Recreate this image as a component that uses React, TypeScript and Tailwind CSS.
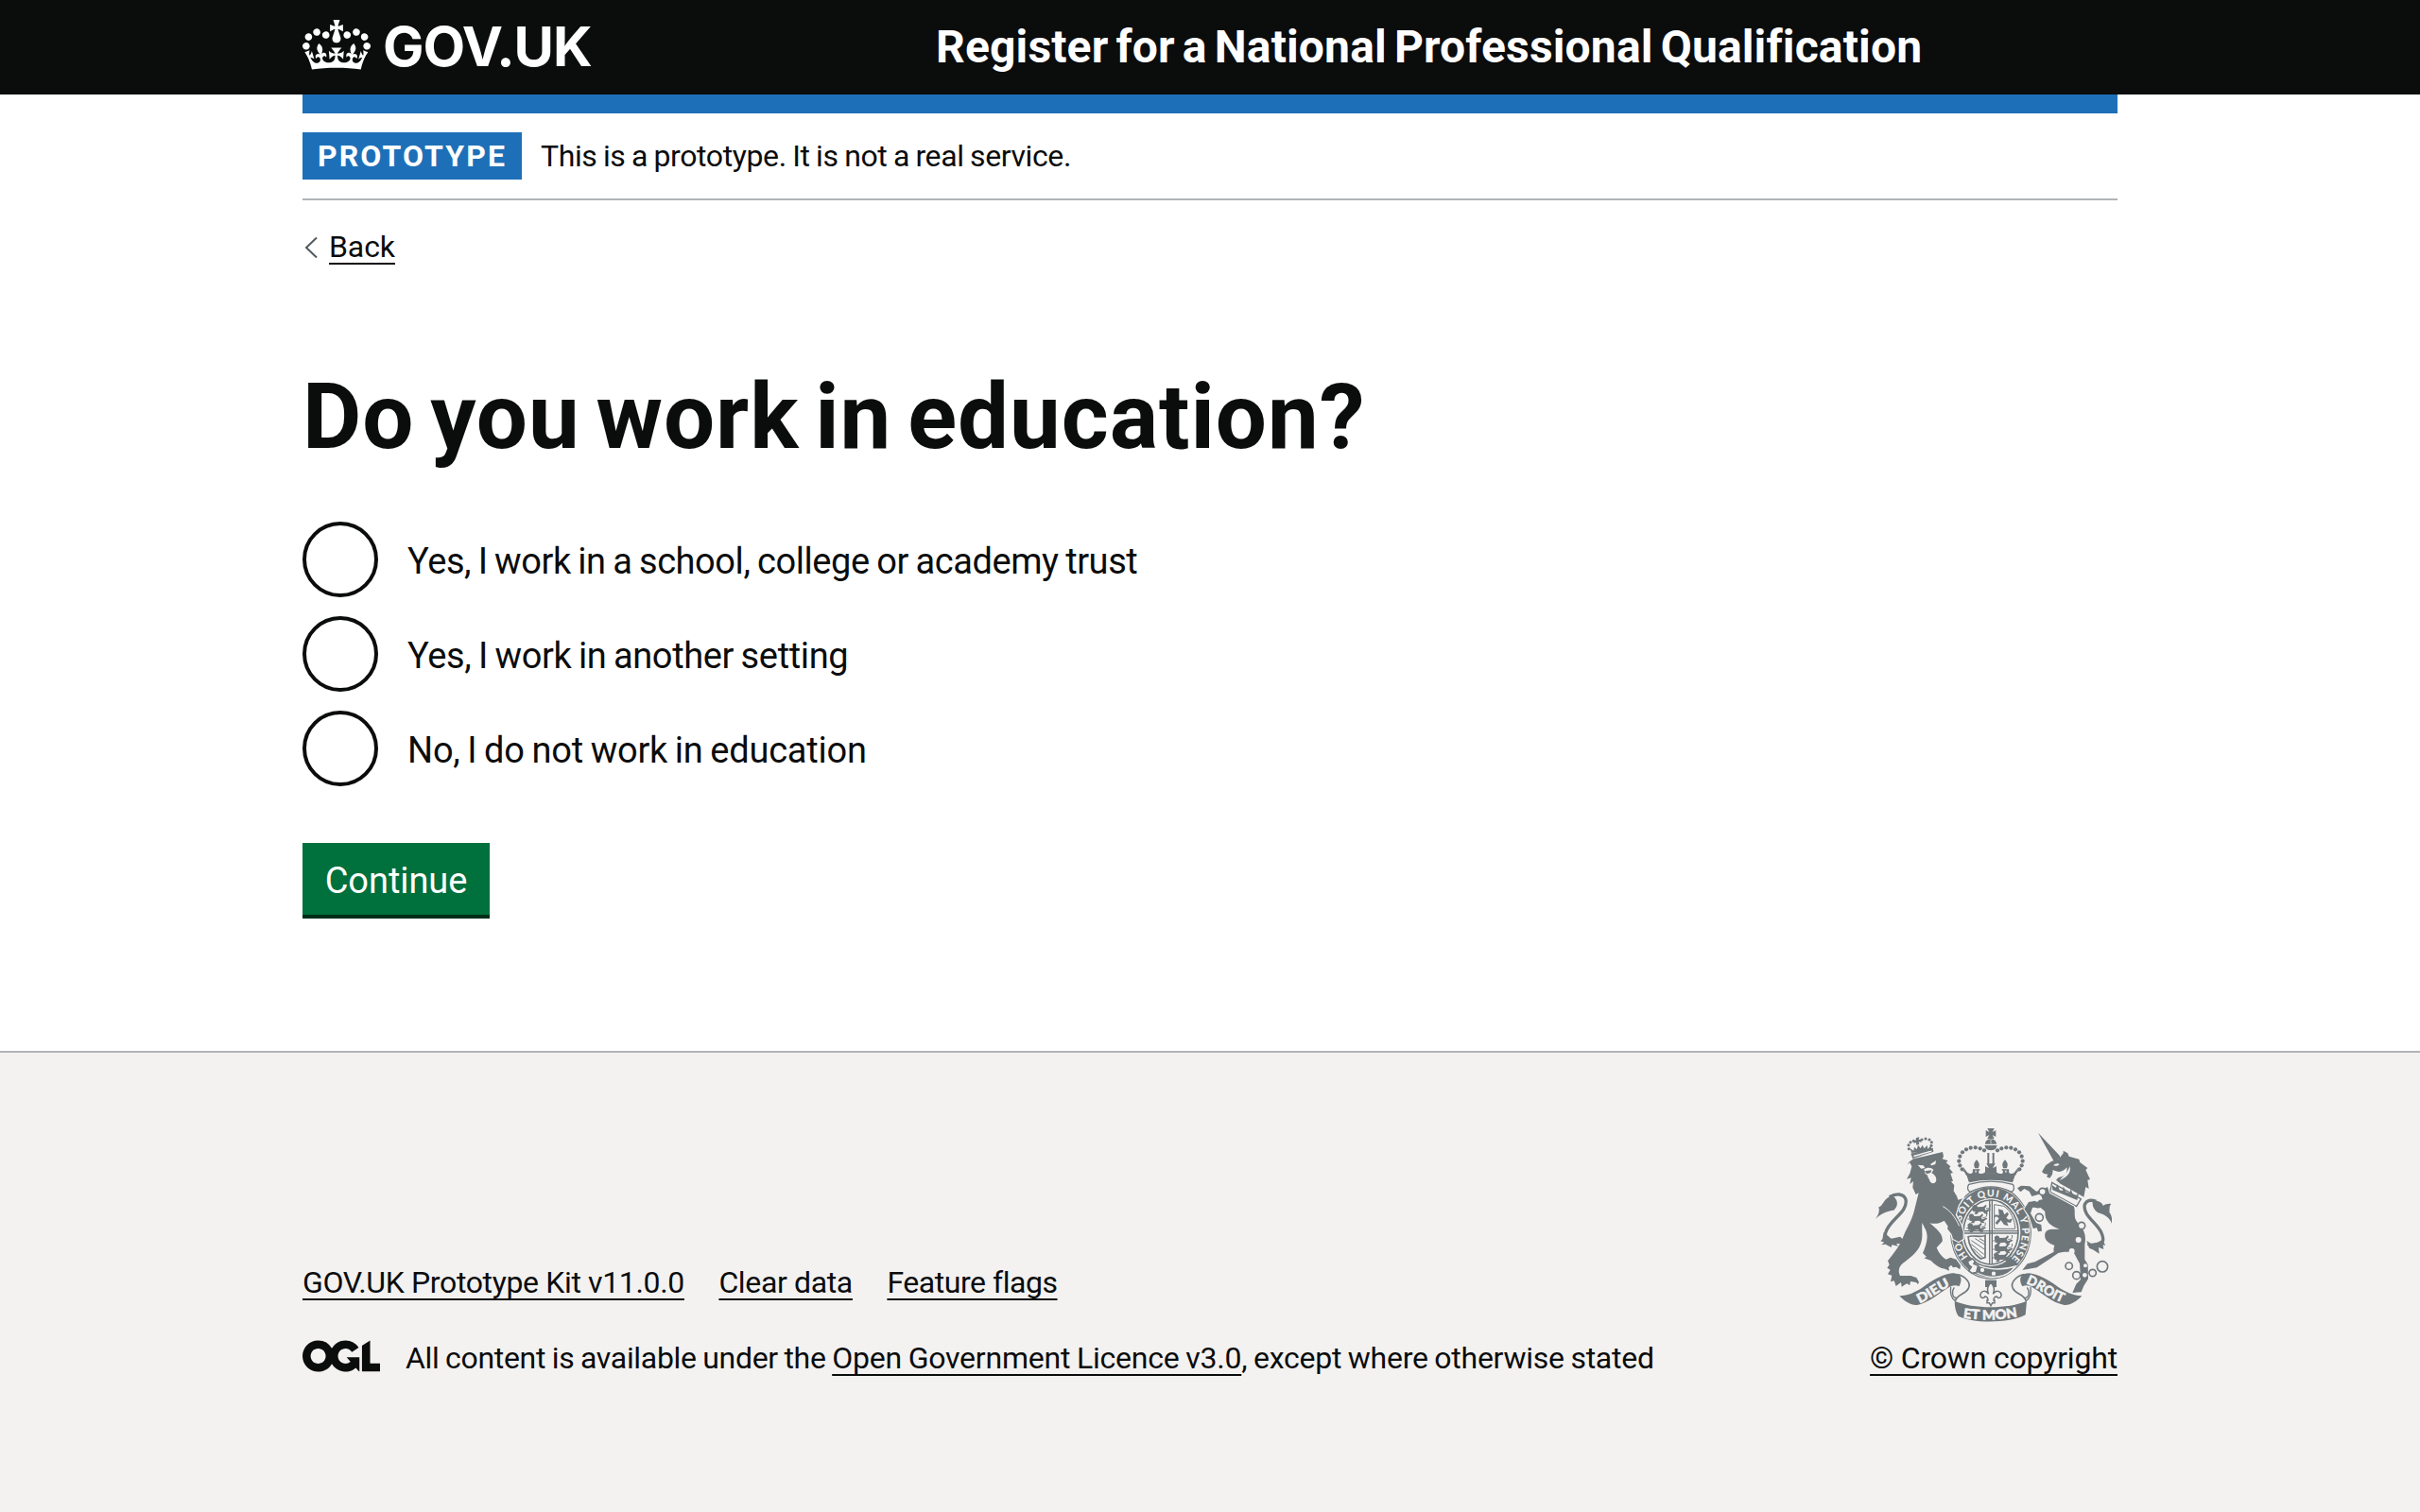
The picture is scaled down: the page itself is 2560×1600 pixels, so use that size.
import React from "react";

const link =
  "underline decoration-2 underline-offset-[6px] [text-decoration-skip-ink:none]";

function Crown() {
  return (
    <svg viewBox="0 0 132 97" className="mt-[21px] h-[53px] w-[72px] shrink-0" fill="currentColor" aria-hidden="true">
      <path d="M25 30.2c3.5 1.5 7.7-.2 9.1-3.7 1.5-3.6-.2-7.8-3.9-9.2-3.6-1.4-7.6.3-9.1 3.9-1.4 3.5.3 7.5 3.9 9zM9 39.5c3.6 1.5 7.8-.2 9.2-3.7 1.5-3.6-.2-7.8-3.9-9.1-3.6-1.5-7.6.2-9.1 3.8-1.4 3.5.3 7.5 3.8 9zM4.4 57.2c3.5 1.5 7.7-.2 9.1-3.8 1.5-3.6-.2-7.7-3.9-9.1-3.5-1.5-7.6.3-9.1 3.8-1.4 3.5.3 7.6 3.9 9.1zm38.3-21.4c3.5 1.5 7.7-.2 9.1-3.8 1.5-3.6-.2-7.7-3.9-9.1-3.6-1.5-7.6.3-9.1 3.8-1.3 3.6.4 7.7 3.9 9.1zm64.4-5.6c-3.6 1.5-7.8-.2-9.1-3.7-1.5-3.6.2-7.8 3.8-9.2 3.6-1.4 7.7.3 9.2 3.9 1.3 3.5-.4 7.5-3.9 9zm15.9 9.3c-3.6 1.5-7.7-.2-9.1-3.7-1.5-3.6.2-7.8 3.7-9.1 3.6-1.5 7.7.2 9.2 3.8 1.5 3.5-.3 7.5-3.8 9zm4.7 17.7c-3.6 1.5-7.8-.2-9.2-3.8-1.5-3.6.2-7.7 3.9-9.1 3.6-1.5 7.7.3 9.2 3.8 1.3 3.5-.4 7.6-3.9 9.1zM89.3 35.8c-3.6 1.5-7.8-.2-9.2-3.8-1.4-3.6.2-7.7 3.9-9.1 3.6-1.5 7.7.3 9.2 3.8 1.4 3.6-.3 7.7-3.9 9.1zM69.7 17.7l8.9 4.7V9.3l-8.9 2.8c-.2-.3-.5-.6-.9-.9L72.4 0H59.6l3.5 11.2c-.3.3-.6.5-.9.9l-8.8-2.8v13.1l8.8-4.7c.3.3.6.7.9.9l-5 15.4v.1c-.2.8-.4 1.6-.4 2.4 0 4.1 3.1 7.5 7 8.1h.2c.3 0 .7.1 1 .1.4 0 .7 0 1-.1h.2c4-.6 7.1-4.1 7.1-8.1 0-.8-.1-1.7-.4-2.4V34l-5.1-15.4c.4-.2.7-.6 1-.9zM66 92.8c16.9 0 32.8 1.1 47.1 3.2 4-16.9 8.9-26.7 14-33.5l-9.6-3.4c1 4.9 1.1 7.2 0 10.2-1.5-1.4-3-4.3-4.2-8.7L108.6 76c2.8-2 5-3.2 7.5-3.3-4.4 9.4-10 11.9-13.6 11.2-4.3-.8-6.3-4.6-5.6-7.9 1-4.7 5.7-5.9 8-.5 4.3-8.7-3-11.4-7.6-8.8 7.1-7.2 7.9-13.5 2.1-21.1-8 6.1-8.1 12.3-4.5 20.8-4.7-5.4-12.1-2.5-9.5 6.2 3.4-5.2 7.9-2 7.2 3.1-.6 4.3-6.4 7.8-13.5 7.2-10.3-.9-10.9-8-11.2-13.8 2.5-.5 7.1 1.8 11 7.3L80.2 60c-4.1 4.4-8 5.3-12.3 5.4 1.4-4.4 8-11.6 8-11.6H55.5s6.4 7.2 7.9 11.6c-4.2-.1-8-1-12.3-5.4l1.4 16.4c3.9-5.5 8.5-7.7 10.9-7.3-.3 5.8-.9 12.8-11.1 13.8-7.2.6-12.9-2.9-13.5-7.2-.7-5 3.8-8.3 7.1-3.1 2.7-8.7-4.6-11.6-9.4-6.2 3.7-8.5 3.6-14.7-4.6-20.8-5.8 7.6-5 13.9 2.2 21.1-4.7-2.6-11.9.1-7.7 8.8 2.3-5.5 7.1-4.2 8.1.5.7 3.3-1.3 7.1-5.7 7.9-3.5.7-9-1.8-13.5-11.2 2.5.1 4.7 1.3 7.5 3.3l-4.7-15.4c-1.2 4.4-2.7 7.2-4.3 8.7-1.1-3-.9-5.3 0-10.2l-9.5 3.4c5 6.9 9.9 16.7 14 33.5 14.8-2.1 30.8-3.2 47.7-3.2z" />
    </svg>
  );
}

function LicenceLogo() {
  return (
    <svg viewBox="0 0 483.2 195.7" className="mt-[6px] h-[34px] w-[82px] shrink-0" fill="currentColor" role="img" aria-label="Open Government Licence">
      <path d="M421.5 142.8V.1l-50.7 32.3v161.1h112.4v-50.7zm-122.3-9.6A47.12 47.12 0 0 1 221 97.8c0-26 21.1-47.1 47.1-47.1 16.7 0 31.4 8.7 39.7 21.8l42.7-27.2A97.63 97.63 0 0 0 268.1 0c-36.5 0-68.3 20.1-85.1 49.7A98 98 0 0 0 97.8 0C43.9 0 0 43.9 0 97.8s43.9 97.8 97.8 97.8c36.5 0 68.3-20.1 85.1-49.7a97.76 97.76 0 0 0 149.6 25.4l19.4 22.2h3v-87.8h-80l24.3 27.5zM97.8 145c-26 0-47.1-21.1-47.1-47.1s21.1-47.1 47.1-47.1 47.1 21.1 47.1 47.1S123.8 145 97.8 145z" />
    </svg>
  );
}

const G = "#6f777b";
const P = "#f3f2f1";

/* One half of the large crown; the other half is its mirror image. */
const archBeads: [number, number][] = [
  [347, 172], [340, 160], [337, 146], [340, 131], [348, 118], [360, 109], [374, 104], [389, 103], [404, 106], [417, 112],
];

function CrownHalf() {
  return (
    <g>
      {archBeads.map(([x, y]) => (
        <circle key={x + "-" + y} cx={x} cy={y} r="6.3" fill={G} />
      ))}
      <path fill={G} d="M438 185h-16l8-14-10-8v18c-12 12-24 6-20-8-5-2-8 4-9 10h-2c0-8-4-12-9-9 4 10-5 16-16 9l-13-17 8 24c7 6 8 14 8 21 22-8 46-11 71-11z" />
      <path fill={G} d="M393 142c-10 10-10 18-5 27h10c5-9 5-17-5-27z" />
      <path fill="none" stroke={G} strokeWidth="4" d="M381 174h22M361 188c-4-8-6-11-12-13" />
    </g>
  );
}

function Scroll() {
  return (
    <g>
      <path fill={G} d="M148 574c28-2 52-12 76-29 30-22 60-39 91-43 27 0 36 16 22 42-8-5-16-4-27 0-36 20-64 51-106 59-19 2-40-12-56-29z" />
      <path fill="none" stroke={G} strokeWidth="5" d="M331 506c24 4 46 26 36 44-10 20-34 16-42 40" />
      <path fill="none" stroke={G} strokeWidth="4" d="M311 545c-3 24 3 38 14 44M322 547c-10 14-6 36 8 33" />
    </g>
  );
}

/* A small lion passant, repeated in the quarters of the shield. */
function Passant({ x, y }: { x: number; y: number }) {
  return (
    <g transform={`translate(${x} ${y})`}>
      <path fill={G} d="M0 6l7-6 8 3 2 5 18-1 8-7 3 4-6 8 2 6 14-5 3 3-12 8 3 6-10-1-7-7-14 2-2 6H6l5-8-8 1z" />
      <path fill="none" stroke={G} strokeWidth="3" d="M44 12c10 2 15-4 12-13M2 17h-6M15 21H6" />
    </g>
  );
}

function Crest() {
  return (
    <svg viewBox="72 30 750 630" className="h-[210px] w-[250px]" role="img" aria-label="Royal coat of arms">
      <defs>
        <path id="garter-low" d="M366 450A99 113 0 0 1 341 350" />
        <path id="garter" d="M344 337A99 113 0 1 1 500 460" />
        <path id="motto-left" d="M212 598C250 582 278 554 318 539" />
        <path id="motto-right" d="M549 535C588 547 624 583 674 598" />
        <path id="motto-mid" d="M350 643C400 652 474 652 532 638" />
      </defs>

      {/* garter and shield */}
      <ellipse cx="438" cy="372" rx="129" ry="149" fill={G} />
      <ellipse cx="438" cy="372" rx="125" ry="145" fill="none" stroke={P} strokeWidth="2.500" />
      <ellipse cx="438" cy="372" rx="94" ry="108" fill={P} />
      <ellipse cx="438" cy="372" rx="87" ry="102" fill="none" stroke={G} strokeWidth="5" />
      <path fill="none" stroke={G} strokeWidth="4" d="M434 268v204M442 268v204M350 368h175M350 375h175" />
      <Passant x={379} y={284} />
      <Passant x={368} y={313} />
      <Passant x={364} y={342} />
      <Passant x={449} y={382} />
      <Passant x={449} y={409} />
      <Passant x={447} y={436} />
      <path fill="none" stroke={G} strokeWidth="3" d="M449 284v77h66c0-28-14-58-36-72z" />
      <path fill={G} d="M462 298l14 4 5 14 9-8 5 6-8 12 8 6 12-4-6 14-12-2 5 12-14-4-10-14-12 14-6-6 12-14-8-6-8 4 4-10 12 2z" />
      <path fill="none" stroke={G} strokeWidth="5" d="M366 386c14-6 42 4 54-4v70l-14 4c-22-14-38-42-40-70z" />
      <path fill="none" stroke={G} strokeWidth="3" d="M376 398l42 28M376 410l40 32M382 424l30 28M388 392l32 20M402 392l18 10" />
      <g fill={P} fontFamily="Lato, sans-serif" fontWeight="900" fontSize="31">
        <text>
          <textPath href="#garter-low" startOffset="0" textLength="52">HO</textPath>
        </text>
        <text>
          <textPath href="#garter" startOffset="0" textLength="392">SOIT QUI MAL Y PENSE</textPath>
        </text>
      </g>
      {/* buckle and strap */}
      <path fill={G} stroke={P} strokeWidth="4" d="M382 470c40 20 84 26 134 10-26 36-74 46-128 18z" />
      <path fill={P} stroke={G} strokeWidth="5" d="M364 464l16-8 8 8-4 8 14 6-6 22-14 2-10-8 8-12-8-6z" />
      <circle cx="411" cy="492" r="6.500" fill={P} />
      <circle cx="447" cy="503" r="6.500" fill={P} />

      {/* large crown */}
      <CrownHalf />
      <g transform="matrix(-1 0 0 1 876 0)">
        <CrownHalf />
      </g>
      <path fill={G} d="M427 42h22l-6 12 11-6v21l-11-6 6 12h-22l6-12-11 6V48l11 6zM438 76c14 0 18 10 18 16h-36c0-6 4-16 18-16zM418 96h40l-4 10c-6 8-26 8-32 0zM427 120h6v36h-6zM443 120h6v36h-6zM424 154h28l-8 14 12-5v22h-36v-22l12 5z" />
      <path stroke={P} strokeWidth="2" d="M438 78v14" />
      <path fill={G} d="M362 194c50-14 102-14 152 0l-8 20c-44-10-92-10-136 0z" />
      <path fill={P} stroke={G} strokeWidth="4" d="M368 220c44-12 96-12 140 0 6 8 4 20-4 24-42-22-90-22-132 0-8-4-10-16-4-24z" />

      {/* lion */}
      <path fill={G} stroke={P} strokeWidth="7" style={{ paintOrder: "stroke" }} d="M172 158l8-10 12-9 93-22 3 14-4 8 18 6-6 6 14 12-4 6 12 14-8 2 8 24-6 2 10 12-2 18 10 16 4 12 14-4-13 22-9 30 16 28 8 24v24l-14 9-18-9-4-14-14-18 2-8-12-18c-12 8-26 12-46 8 22 18 44 36 40 58l-18 20c6 14 14 28 30 37l14-6 18 6 14 20-2 12-12-8-10 2-6-8-8 8 2 10-14-6c-18-2-30-12-44-26l-22-8 8-4-12-12c10-24 20-50 9-74l-11-22c-2 22 4 46-5 68-10 26-34 44-56 60-12 10-17 24-9 40h34l18 6 8 14-3 7-6-6-18-3-2 12-10-5-16 10-2-14-16 12-6-17-11 3 4-20-13-4 8-14-10-6 7-10-5-12c18-24 40-48 52-84 10-24 26-46 34-84l12-48-9 5-10-22 2-20-11 9 4-20-14 4 10-18 6-22-6-12z" />
      <path fill={P} d="M206 158l18 2 5 8-12 2zM246 156l18-12-2 12-12 4zM226 172c10-8 24-6 30 2l-6 10c8 4 18 14 14 26-4 10-18 8-20-2-2-8-8-10-6-16l-8-6z" />
      <path fill={G} d="M228 178l22-3-3 8-12 4z" />
      <path fill="none" stroke={P} strokeWidth="3" d="M286 290c22 12 38 32 52 62" />
      <path fill="none" stroke={G} strokeWidth="10" d="M152 396c-26 20-54 8-48-22 10-42 72-64 64-106-6-20-32-20-52-8" />
      <path fill={G} d="M72 330c14-20 12-30 10-38 14-2 14-28 44-36 20 14 18 34 4 46-20 2-42 10-58 28zM98 372l-4 22-6 6 12 4-10 8 14-2 18 10 2-8 20 4-6-8c14 2 22-4 26-10l-14-12-28 6z" />
      <path fill={G} d="M184 122l70-18 2 12-66 22z" />
      <path fill={P} d="M192 128l58-16v4l-56 17z" />
      <path fill={G} d="M186 120l-4-14 11 7 2-12 8 8 4-14 8 10 6-10 6 11 9-10 2 11 12-12-2 18z" />
      {[[178, 107], [177, 95], [183, 86], [193, 82], [219, 78], [231, 75], [243, 78], [250, 86], [249, 97]].map(([x, y]) => (
        <circle key={x} cx={x} cy={y} r="4.6" fill={G} />
      ))}
      <path fill={G} d="M201 72l10-2-2 8 8-1 1 9-9-1 2 8-9 2-1-8-7 2-2-8 8-1z" />

      {/* unicorn */}
      <path fill={G} d="M588 56l68 72 2 8-20 10zM600 180l12-20 18-13 24-8 14-18v-8l14 8 4 10 32 9 3 10 24 18-6 6 14 30-8 2 4 28-10-6-6 32c-24-14-48-28-74-42l-14-12 8-8c16-2 30-8 26-32-16 20-30 14-44 8l-2 14-8 12-10-4 4-8-12-2z" />
      <path fill={P} d="M636 160c6-6 14-8 20-4-4 6-12 6-20 4zM688 162c8 22-14 40-32 44 14-14 26-22 32-44z" />
      <path fill={P} stroke={G} strokeWidth="4" d="M632 214l92 52-14 24-84-46z" />
      <path fill={G} d="M634 238l-2-16 12 8 6-10 6 18 10 2 2-14 8 18 12 4 4-14 6 18 12 2 8-10-6 26z" />
      <path fill={G} stroke={P} strokeWidth="6" style={{ paintOrder: "stroke" }} d="M624 248l78 42c6 18-4 36 12 52 20 22 28 38 22 68v48l10 16 1 46-14 22-8 20-28 2 12-28 14-14-3-50-18-34c-16-6-34-4-50 0l-26 18-42 28-46 8 16-20 24-6 60-32c-2-8 0-12 2-20-18-8-34-16-30-38 4-14 18-14 32-14h14c-26-8-48-24-46-56l-14-12c-12 4-18-2-26 0l-6 18 18 30 16 6 2 20-12 2-4-12-12 2-12-38-16-24 14-22 44-8-6-18-28 8-8-16-16-8-12 10-10-12 12-8 28 2 20 16 16-4 20-10z" />
      {[[602, 243, 11], [592, 325, 12], [726, 351, 11], [686, 479, 11], [710, 509, 12], [761, 501, 11], [792, 481, 17]].map(([x, y, r]) => (
        <circle key={x} cx={x} cy={y} r={r} fill={P} stroke={G} strokeWidth="5" />
      ))}
      {[[584, 268, 7], [716, 396, 9], [695, 432, 9], [738, 478, 6], [736, 508, 7]].map(([x, y, r]) => (
        <circle key={x} cx={x} cy={y} r={r} fill={P} />
      ))}
      <path fill="none" stroke={G} strokeWidth="10" d="M746 408c30 20 58 2 44-32-12-32-62-58-54-92 6-14 20-16 36-10" />
      <path fill={G} d="M762 272c24-2 32 12 32 16 8-6 18-8 26-6-8 8-4 20-6 26 6 8 10 18 8 36-10-22-24-28-44-34-14-10-20-24-16-38zM742 398l12 10 22-4 16-8 10 18-8-2 2 14-16-6 2 20-18-12-14-6z" />

      {/* fleur-de-lis below the garter */}
      <path fill={G} d="M420 524h36v22h-36z" />
      <path fill={P} stroke={G} strokeWidth="4.5" d="M438 532c-10 10-14 22-7 36-12-18-28-6-26 6 2 8 12 8 14 2 8 0 10 6 10 12h-3v8h7l5 9 5-9h7v-8h-3c0-6 2-12 10-12 2 6 12 6 14-2 2-12-14-24-26-6 7-14 3-26-7-36z" />

      {/* motto scroll */}
      <Scroll />
      <g transform="matrix(-1 0 0 1 875 0)">
        <Scroll />
      </g>
      <path fill={G} d="M323 590c60 26 170 26 229 0l-4 44c-50 28-170 28-213 4-8-12-12-28-12-48z" />
      <g fill={P} stroke={P} strokeWidth="1.500" fontFamily="Lato, sans-serif" fontWeight="900" fontSize="42">
        <text>
          <textPath href="#motto-left" textLength="112" lengthAdjust="spacingAndGlyphs">DIEU</textPath>
        </text>
        <text>
          <textPath href="#motto-right" textLength="130" lengthAdjust="spacingAndGlyphs">DROIT</textPath>
        </text>
        <text>
          <textPath href="#motto-mid" textLength="174" lengthAdjust="spacingAndGlyphs">ET MON</textPath>
        </text>
      </g>
    </svg>
  );
}

function Radio({ label, spacing }: { label: string; spacing: string }) {
  return (
    <label className="flex h-20 items-start">
      <input type="radio" name="work" className="size-20 shrink-0 appearance-none rounded-full border-4 border-[#0b0c0c] bg-white" />
      <span className={"ml-[31px] mt-[2px] text-[38px] leading-[80px] [word-spacing:-1.5px] " + spacing}>{label}</span>
    </label>
  );
}

export default function App() {
  return (
    <div className="flex min-h-[1600px] w-[2560px] flex-col overflow-hidden bg-white font-['Roboto',sans-serif] text-[32px] leading-[50px] text-[#0b0c0c]">
      <header className="h-[100px] bg-[#0b0c0c] text-white">
        <div className="mx-auto flex w-[1920px] items-start">
          <div className="flex w-[670px] items-start">
            <Crown />
            <span className="ml-[13px] mt-[19px] font-['Inter',sans-serif] text-[58px] font-bold leading-[60px] tracking-[-1.1px]">GOV.UK</span>
          </div>
          <div className="mt-[20px] whitespace-nowrap text-[48px] font-bold leading-[60px] tracking-[0.15px] [word-spacing:-4px]">
            Register for a National Professional Qualification
          </div>
        </div>
      </header>

      <div className="mx-auto w-[1920px]">
        <div className="h-5 bg-[#1d70b8]" />
        <div className="flex items-center border-b-2 border-[#b1b4b6] py-5">
          <strong className="h-[50px] w-[232px] bg-[#1d70b8] pl-4 font-bold tracking-[2.1px] text-white">PROTOTYPE</strong>
          <span className="ml-[20px] tracking-[-0.4px] [word-spacing:-1px]">This is a prototype. It is not a real service.</span>
        </div>

        <div className="mt-6 flex items-start">
          <svg viewBox="0 0 28 50" className="h-[50px] w-7" fill="none" stroke="#505a5f" strokeWidth="2">
            <path d="M15 15.500L4 26L15 36.500" />
          </svg>
          <a href="#back" className={"tracking-[-0.08px] " + link}>Back</a>
        </div>

        <main>
          <h1 className="mt-[105px] text-[96px] font-bold leading-[100px] tracking-[0.95px] [word-spacing:-8px]">Do you work in education?</h1>
          <div className="mt-[61px] flex flex-col gap-5">
            <Radio label="Yes, I work in a school, college or academy trust" spacing="tracking-[-0.42px]" />
            <Radio label="Yes, I work in another setting" spacing="tracking-[-0.37px]" />
            <Radio label="No, I do not work in education" spacing="tracking-[-0.22px]" />
          </div>
          <button className="mt-[60px] block h-[76px] w-[198px] bg-[#00703c] pt-[2px] text-center text-[38px] leading-[76px] tracking-[-0.07px] text-white shadow-[0_4px_0_#002d18]">
            Continue
          </button>
        </main>
      </div>

      <footer className="mt-[144px] grow border-t-2 border-[#b1b4b6] bg-[#f3f2f1]">
        <div className="mx-auto flex w-[1920px] items-end justify-between pt-[76px]">
          <div>
            <nav className="flex gap-[36.500px]">
              <a href="#kit" className={"tracking-[-0.36px] " + link}>GOV.UK Prototype Kit v11.0.0</a>
              <a href="#clear" className={"tracking-[-0.36px] " + link}>Clear data</a>
              <a href="#flags" className={"tracking-[-0.46px] " + link}>Feature flags</a>
            </nav>
            <div className="mt-[30px] flex items-start">
              <LicenceLogo />
              <p className="ml-[27px] whitespace-nowrap tracking-[-0.26px] [word-spacing:-1px]">
                <span className="tracking-[-0.32px]">All content is available under the </span>
                <a href="#ogl" className={"tracking-[-0.22px] " + link}>Open Government Licence v3.0</a>
                , except where otherwise stated
              </p>
            </div>
          </div>
          <div className="flex flex-col items-center">
            <Crest />
            <a href="#copyright" className={"mt-[12px] tracking-[-0.18px] " + link}>© Crown copyright</a>
          </div>
        </div>
      </footer>
    </div>
  );
}
